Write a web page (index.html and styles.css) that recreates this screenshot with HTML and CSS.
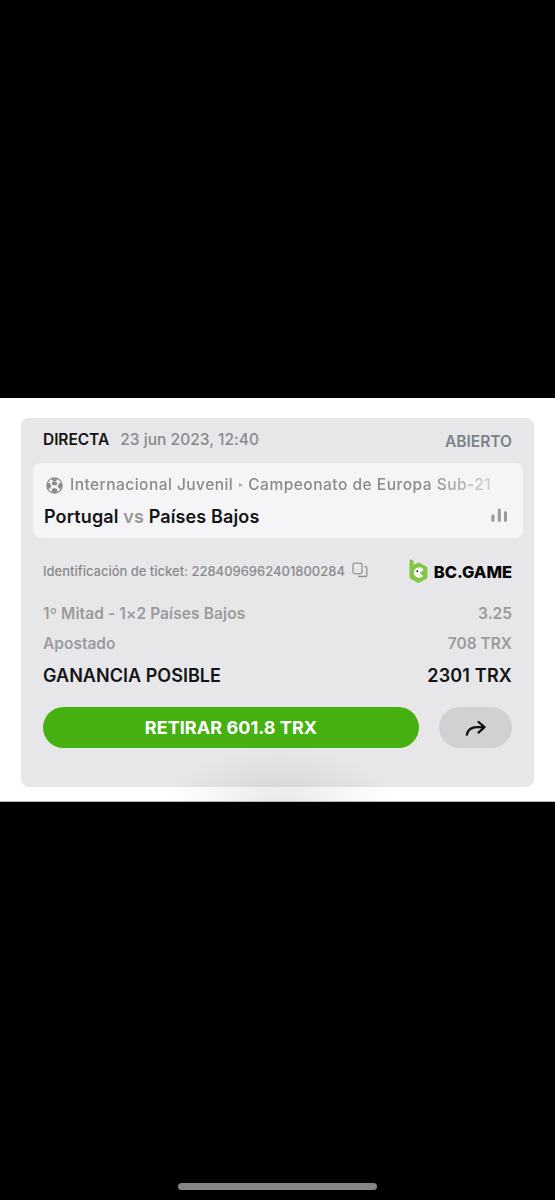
FILE: index.html
```
<!DOCTYPE html>
<html lang="es">
<head>
<meta charset="utf-8">
<title>BC.GAME</title>
<link rel="stylesheet" href="styles.css">
</head>
<body>
<main class="sheet">
  <section class="card">
    <header class="head">
      <div class="head-left"><span class="kind">DIRECTA</span><span class="date">23 jun 2023, 12:40</span></div>
      <span class="status">ABIERTO</span>
    </header>
    <div class="match">
      <div class="league">
        <svg class="ball" viewBox="0 0 16 16"><circle cx="8" cy="8" r="7.200" fill="none" stroke="currentColor" stroke-width="1.200"/><g fill="currentColor"><path d="M5 1.300h6L9.800 3.500 8 4.300 6.200 3.500ZM8 4l2.600 1.200-.6 2.600H6l-.6-2.600ZM1 6l2.400-.6L5 8.600 3.600 11 1.400 10.600ZM15 6l-2.400-.6L11 8.600l1.400 2.400 2.200-.4ZM5.600 11.200l2.400-.8 2.400.8.300 2.300L9.200 15H6.800l-1.500-1.500Z"/></g></svg>
        <div class="league-name"><span class="region">Internacional Juvenil</span><i class="caret"></i><span class="cup">Campeonato de Europa Sub-21</span></div>
      </div>
      <div class="teams">
        <div class="versus">Portugal <span class="vs">vs</span> Países Bajos</div>
        <svg class="bars" viewBox="0 0 16 14"><path d="M1.800 7.500v4.200M7.800 1.700v10M13.600 4.300v7.400" stroke="currentColor" stroke-width="2.800" stroke-linecap="round"/></svg>
      </div>
    </div>
    <div class="ticket">
      <span class="ticket-id">Identificación de ticket: 2284096962401800284</span>
      <svg class="copy" viewBox="0 0 16 16"><rect x="1" y="1.200" width="9" height="10.400" rx="1.500"/><path d="M12.200 4.700h1.400q1.300 0 1.300 1.300v7.200q0 1.300-1.300 1.300H7.500q-1.200 0-1.200-1.100"/></svg>
      <div class="brand">
        <svg class="brand-mark" viewBox="0 0 19 25"><path fill="#82c647" d="M.5 1.500Q.5.200 1.700.500L4 1.300q.6.200.6.900v3.700L8.600 3.700q.9-.5 1.800 0l7 3.800q1 .5 1 1.600v9q0 1.100-1 1.600l-7 4q-.9.500-1.800 0l-7-4q-1.100-.6-1.100-1.700Z"/><path fill="#fff" d="M13.900 9.700A5.300 5.300 0 1 0 14.200 17L10.500 13.700 14.300 11.500Z"/><circle cx="8.300" cy="12.200" r=".9" fill="#111"/></svg>
        <span class="brand-name">BC.GAME</span>
      </div>
    </div>
    <dl class="rows">
      <div class="row"><dt class="pick">1º Mitad - 1×2 Países Bajos</dt><dd class="odds">3.25</dd></div>
      <div class="row"><dt class="staked">Apostado</dt><dd class="stake">708 TRX</dd></div>
      <div class="row total"><dt class="gain">GANANCIA POSIBLE</dt><dd class="sum">2301 TRX</dd></div>
    </dl>
    <div class="actions">
      <button class="cashout"><span>RETIRAR 601.8 TRX</span></button>
      <button class="share" aria-label="Compartir"><svg viewBox="0 0 22 18"><path d="M1.800 15.700Q3.500 8.200 12 8.200h7.200M13.500 3l6 5.200-6 5.400"/></svg></button>
    </div>
  </section>
</main>
<div class="home"></div>
</body>
</html>
```

FILE: styles.css
```
* { box-sizing: border-box; }
body {
  margin: 0;
  height: 1200px;
  padding-top: 398px;
  display: flex;
  flex-direction: column;
  background: #000;
  font-family: Inter, "Liberation Sans", sans-serif;
  color: #141416;
  white-space: nowrap;
  overflow: hidden;
}
.sheet {
  position: relative;
  height: 404px;
  flex: none;
  padding: 20px 21px 15px;
  background: #fff;
  border-bottom: 1px solid #b8b8b8;
  overflow: hidden;
}
.sheet::after {
  content: "";
  position: absolute;
  left: 165px;
  top: 350px;
  width: 230px;
  height: 106px;
  background: radial-gradient(closest-side, rgba(0,0,0,.09), rgba(0,0,0,.03) 60%, transparent);
}
.card {
  height: 369px;
  padding: 0 11px 0 12px;
  background: #e7e7e9;
  border-radius: 8px;
}
.head {
  height: 45px;
  padding: 0 11px 0 10px;
  display: flex;
  justify-content: space-between;
  line-height: 20px;
}
.head-left { padding-top: 12px; display: flex; gap: 11px; }
.kind { font-size: 15.500px; font-weight: 600; letter-spacing: -.06px; }
.date { font-size: 15.500px; font-weight: 500; letter-spacing: .05px; color: #8a8a8c; }
.status { padding-top: 14px; font-size: 15.500px; font-weight: 600; color: #7a828a; }
.match {
  height: 75px;
  padding: 12px 13px 0 11px;
  background: #f5f5f7;
  border-radius: 8px;
}
.league { height: 20px; padding-left: 2px; display: flex; align-items: center; gap: 7px; line-height: 20px; font-size: 15.500px; font-weight: 500; color: #8a8a8c; }
.ball { width: 17px; height: 17px; flex: none; }
.league-name {
  width: 423px;
  display: flex;
  align-items: center;
  -webkit-mask-image: linear-gradient(90deg, #000 84%, transparent 107%);
  mask-image: linear-gradient(90deg, #000 84%, transparent 107%);
}
.region { letter-spacing: .46px; }
.cup { letter-spacing: .5px; }
.caret { margin: 0 5px 0 6px; border-left: 4px solid #aaa; border-top: 2.500px solid transparent; border-bottom: 2.500px solid transparent; }
.teams { height: 22px; margin-top: 11px; padding-right: 2px; display: flex; justify-content: space-between; align-items: center; line-height: 22px; }
.versus { font-size: 18px; font-weight: 600; letter-spacing: .13px; }
.vs { color: #98989a; }
.bars { width: 17px; height: 15px; margin-top: -4px; color: #98989a; }
.ticket { height: 50px; padding: 14px 11px 0 10px; display: flex; align-items: flex-start; }
.ticket-id { line-height: 18px; padding-top: 10px; font-size: 13px; font-weight: 500; letter-spacing: -.01px; color: #8a8a8c; }
.copy { width: 16px; height: 16px; margin: 10px 0 0 7px; fill: none; stroke: #949496; stroke-width: 1.300; }
.brand { margin-left: auto; padding-top: 7px; display: flex; align-items: flex-start; gap: 5px; }
.brand-mark { width: 19px; height: 25px; margin-right: 1px; }
.brand-name { padding-top: 4px; line-height: 18px; font-size: 16.500px; font-weight: 800; letter-spacing: -.03px; color: #050505; }
.rows { margin: 0; padding: 11px 11px 0 10px; }
.row { height: 30px; display: flex; justify-content: space-between; line-height: 30px; font-size: 15.500px; font-weight: 600; color: #9b9b9d; }
.pick { letter-spacing: .09px; }
.row dd { margin: 0; }
.total { height: 33px; line-height: 33px; font-size: 18px; color: #141416; }
.sum { letter-spacing: .18px; }
.gain { letter-spacing: .03px; }
.actions { margin: 15px 11px 0 10px; display: flex; justify-content: space-between; }
.actions button { height: 41px; border: 0; padding: 0; border-radius: 21px; font: inherit; display: flex; align-items: center; justify-content: center; }
.actions .cashout { width: 376px; background: #45b010; color: #fff; font-size: 18px; font-weight: 700; letter-spacing: .06px; }
.actions .share { width: 73px; background: #d1d1d3; }
.share svg { width: 22px; height: 18px; fill: none; stroke: #111; stroke-width: 2.300; stroke-linecap: round; stroke-linejoin: round; }
.home { width: 199px; height: 7px; margin: auto 0 10px 178px; flex: none; border-radius: 4px; background: #858585; }
```
